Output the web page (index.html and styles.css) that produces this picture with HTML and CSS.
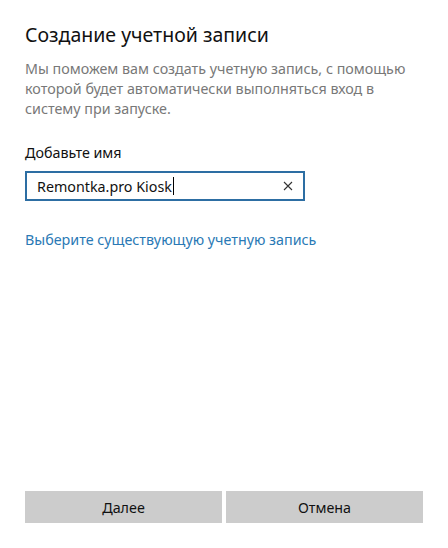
FILE: index.html
```html
<!DOCTYPE html>
<html lang="ru">
  <head>
    <meta charset="utf-8" />
    <title>Создание учетной записи</title>
    <link rel="stylesheet" href="styles.css">
  </head>

  <body>
    <div class="dialog">
      <div class="content">
        <h1>Создание учетной записи</h1>
        <p class="intro">
          Мы поможем вам создать учетную запись, с помощью которой будет
          автоматически выполняться вход в систему при запуске.
        </p>

        <label class="field-label" for="account-name">Добавьте имя</label>
        <div class="textbox">
          <span class="value" id="account-name">Remontka.pro Kiosk</span><span class="caret"></span>
          <svg class="clear" width="10" height="10" viewBox="0 0 10 10">
            <path d="M1 1 L9 9 M9 1 L1 9" stroke="#333" stroke-width="1.1" fill="none" />
          </svg>
        </div>

        <a class="link" href="#">Выберите существующую учетную запись</a>
      </div>

      <div class="buttons">
        <button>Далее</button>
        <button>Отмена</button>
      </div>
    </div>
  </body>
</html>
```

FILE: styles.css
```css
html,
body {
  margin: 0;
  height: 100%;
}
body {
  background: #fff;
  font-family: "Noto Sans", "Open Sans", sans-serif;
  color: #000;
}
.dialog {
  height: 100%;
  display: flex;
  flex-direction: column;
  padding: 0 25px;
  box-sizing: border-box;
}
.content {
  flex: 1;
}
h1 {
  font-weight: normal;
  font-size: 19.5px;
  margin: 22px 0 0;
  line-height: 26px;
  color: #111;
}
.intro {
  color: #787878;
  font-size: 14.3px;
  line-height: 20px;
  margin: 11px 0 0;
  width: 390px;
}
.field-label {
  display: block;
  font-size: 14.3px;
  line-height: 20px;
  margin-top: 24px;
  color: #111;
}
.textbox {
  box-sizing: border-box;
  margin-top: 8px;
  width: 280px;
  height: 30px;
  border: 2px solid #2d6ea3;
  display: flex;
  align-items: center;
  padding: 0 10px;
  font-size: 14.3px;
  color: #111;
}
.caret {
  width: 1px;
  height: 18px;
  background: #000;
  margin-left: 1px;
}
.clear {
  margin-left: auto;
}
.link {
  display: block;
  margin-top: 29px;
  font-size: 14.3px;
  color: #2a79b5;
  text-decoration: none;
}
.buttons {
  display: flex;
  gap: 4px;
  margin-bottom: 25px;
}
button {
  flex: 1;
  height: 32px;
  border: none;
  background: #ccc;
  font-family: inherit;
  font-size: 14.3px;
  color: #111;
}
```
